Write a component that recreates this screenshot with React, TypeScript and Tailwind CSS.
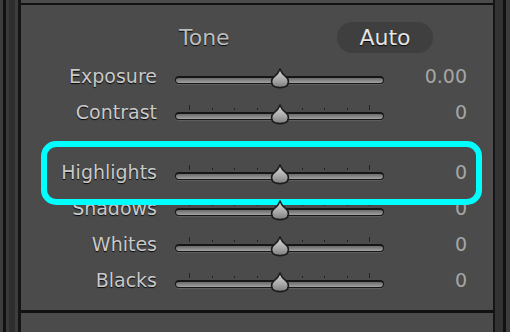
import React from "react";

const font = "font-['DejaVu_Sans','Liberation_Sans',sans-serif]";
const shadow = "[text-shadow:0_1px_1px_rgba(0,0,0,0.9)]";

const Thumb = () => (
  <svg width="22" height="21" viewBox="0 0 22 21" className="absolute left-1/2 top-1/2 -translate-x-1/2 -translate-y-[62%]">
    <defs>
      <linearGradient id="thumbFill" x1="0" y1="0" x2="0" y2="1">
        <stop offset="0" stopColor="#d6d6d6" />
        <stop offset="0.6" stopColor="#a8a8a8" />
        <stop offset="1" stopColor="#7c7c7c" />
      </linearGradient>
    </defs>
    <path
      d="M11 1.2 C12.2 4.2 13.6 6.4 17 9 C20.6 11.8 20 17.2 16 18.8 C13 19.8 9 19.8 6 18.8 C2 17.2 1.4 11.8 5 9 C8.4 6.4 9.8 4.2 11 1.2 Z"
      fill="url(#thumbFill)"
      stroke="#1c1c1c"
      strokeWidth="1.6"
    />
  </svg>
);

const Slider = ({ ticks }: { ticks: boolean }) => (
  <div className="flex flex-col w-[209px] mt-[1px]">
    <div className={`flex justify-between items-end h-[5px] px-[14px] ${ticks ? "" : "invisible"}`}>
      {Array.from({ length: 9 }).map((_, i) => (
        <div key={i} className={`w-px bg-[#222222] ${i === 0 || i === 8 ? "h-[5px]" : "h-[2px]"}`} />
      ))}
    </div>
    <div className="relative mt-[2px] h-[8px] rounded-full border-t-2 border-b border-x border-[#161616] bg-gradient-to-b from-[#6a6a6a] to-[#a2a2a2] shadow-[0_1px_0_#5e5e5e]">
      <Thumb />
    </div>
  </div>
);

const Row = ({ label, value, ticks = true }: { label: string; value: string; ticks?: boolean }) => (
  <div className="flex items-center h-[36px]">
    <div className={`w-[136px] text-right text-[19px] text-[#cacaca] ${shadow}`}>{label}</div>
    <div className="ml-[18px]">
      <Slider ticks={ticks} />
    </div>
    <div className="flex-1 text-right pr-[26px] text-[19px] text-[#a6a6a6]">{value}</div>
  </div>
);

export default function App() {
  return (
    <div className={`flex w-[510px] h-[332px] overflow-hidden bg-[#3a3a3a] ${font}`}>
      <div className="flex h-full shrink-0">
        <div className="w-[3px] bg-[#3d3d3d]" />
        <div className="w-[3px] bg-[#111111]" />
        <div className="w-[3px] bg-[#3a3a3a]" />
        <div className="w-[6px] bg-[#2e2e2e]" />
        <div className="w-[3px] bg-[#3d3d3d]" />
        <div className="w-[3px] bg-[#141414]" />
      </div>

      <div className="flex flex-col flex-1 bg-[#4b4b4b]">
        <div className="h-[3px] shrink-0" />
        <div className="h-[2px] shrink-0 bg-[#111111]" />

        <div className="flex flex-col h-[305px] pt-[17px]">
          <div className="flex items-center h-[31px]">
            <div className={`ml-[158px] w-[158px] text-[22px] text-[#bdbdbd] ${shadow}`}>Tone</div>
            <div className={`w-[96px] h-[31px] rounded-full bg-[#3f3f3f] flex items-center justify-center text-[22px] text-[#e4e4e4] ${shadow}`}>
              Auto
            </div>
          </div>

          <div className="mt-[5px]">
            <Row label="Exposure" value="0.00" ticks={false} />
            <Row label="Contrast" value="0" />
          </div>

          <div className="mt-[24px]">
            <div className="relative">
              <Row label="Highlights" value="0" />
              <div className="absolute left-[20px] right-[11px] -top-[13px] -bottom-[15px] rounded-[15px] border-[6px] border-[#00ffff]" />
            </div>
            <Row label="Shadows" value="0" />
            <Row label="Whites" value="0" />
            <Row label="Blacks" value="0" />
          </div>
        </div>

        <div className="h-[3px] shrink-0 bg-[#111111]" />
        <div className="flex-1" />
      </div>

      <div className="flex h-full shrink-0">
        <div className="w-[2px] bg-[#151515]" />
        <div className="w-[8px] bg-[#333333]" />
        <div className="w-[3px] bg-[#111111]" />
        <div className="w-[4px] bg-[#3c3c3c]" />
      </div>
    </div>
  );
}
